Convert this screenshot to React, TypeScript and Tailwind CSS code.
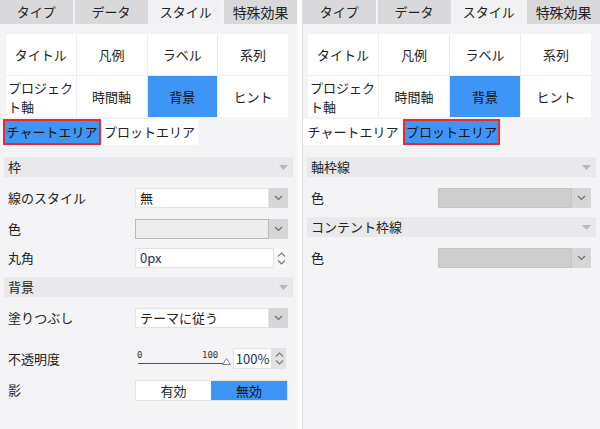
import React from 'react'

const FONT = "font-['Noto_Sans_CJK_JP','Noto_Sans',sans-serif]"

const TABS = ['タイプ', 'データ', 'スタイル', '特殊効果']
const GRID = [
  ['タイトル', '凡例', 'ラベル', '系列'],
  ['プロジェクト軸', '時間軸', '背景', 'ヒント'],
]

function Chevron() {
  return (
    <svg width="9" height="6" viewBox="0 0 9 6" fill="none">
      <path d="M1 1l3.5 3.5L8 1" stroke="#6b6b6b" strokeWidth="1.2" />
    </svg>
  )
}

function Spinner({ gray }: { gray?: boolean }) {
  return (
    <div className={`flex w-[14px] flex-col items-center justify-center gap-[3px] ${gray ? 'bg-[#e2e2e4]' : 'bg-[#f7f7f7]'}`}>
      <svg width="9" height="5" viewBox="0 0 9 5" fill="none">
        <path d="M1 4.5L4.5 1 8 4.5" stroke="#777" strokeWidth="1.1" />
      </svg>
      <svg width="9" height="5" viewBox="0 0 9 5" fill="none">
        <path d="M1 0.5L4.5 4 8 0.5" stroke="#777" strokeWidth="1.1" />
      </svg>
    </div>
  )
}

function Header({ label, top }: { label: string; top: string }) {
  return (
    <div className={`${top} mx-[4px] flex h-[20px] items-center justify-between bg-[#e9e9eb] pl-[4px] pr-[5px] text-[13px] text-[#222]`}>
      <span>{label}</span>
      <svg width="9" height="5" viewBox="0 0 9 5">
        <path d="M0 0h9L4.5 5z" fill="#b8b8bc" />
      </svg>
    </div>
  )
}

function Row({ label, top, children }: { label: string; top: string; children: React.ReactNode }) {
  return (
    <div className={`${top} flex h-[20px] items-center`}>
      <span className="w-[135px] pl-[8px] text-[13px] text-[#222]">{label}</span>
      <div className="flex h-full w-[153px]">{children}</div>
    </div>
  )
}

function Select({ value, variant }: { value?: string; variant: 'white' | 'disabled' | 'gray' }) {
  const box =
    variant === 'white'
      ? 'bg-white border border-[#e3e3e3]'
      : variant === 'disabled'
        ? 'bg-[#ececec] border border-[#b9b9b9]'
        : 'bg-[#cecece] border border-[#c4c4c4]'
  return (
    <div className="flex h-full w-full">
      <div className={`flex flex-1 items-center px-[4px] text-[13px] text-[#222] ${box}`}>{value}</div>
      <div className="flex w-[19px] items-center justify-center bg-[#d6d6d8]">
        <Chevron />
      </div>
    </div>
  )
}

function Panel({ side }: { side: 'left' | 'right' }) {
  const left = side === 'left'
  return (
    <div className={`flex h-full flex-col bg-[#f4f4f6] ${left ? 'w-[297px]' : 'w-[298px] border-l border-[#dedee0]'}`}>
      <div className="flex h-[24px] gap-[2px]">
        {TABS.map((t, i) => (
          <div
            key={t}
            className={`flex flex-1 items-center justify-center text-[13px] text-[#222] ${i === 2 ? 'bg-[#f2f2f4]' : 'bg-[#d9d9dc]'} ${i === 3 ? 'text-[14px]' : ''}`}
          >
            {t}
          </div>
        ))}
      </div>

      <div className={`mt-[10px] grid w-[282px] grid-cols-4 gap-[1px] bg-[#ededef] ${left ? 'ml-[6px]' : 'ml-[5px] w-[283px]'}`}>
        {GRID.flat().map((g) => (
          <div
            key={g}
            className={`flex h-[41px] items-center justify-center text-[13px] leading-[19px] ${g === '背景' ? 'bg-[#3d95f5] text-[#111]' : 'bg-white text-[#222]'} ${g === 'プロジェクト軸' ? 'justify-start px-[2px]' : ''}`}
          >
            {g === 'プロジェクト軸' ? (
              <span>
                プロジェク
                <br />
                ト軸
              </span>
            ) : (
              g
            )}
          </div>
        ))}
      </div>

      <div className={`mt-[2px] flex h-[26px] items-center text-[13px] ${left ? 'pl-[3px]' : 'pl-0'}`}>
        <div
          className={`flex h-full items-center justify-center ${left ? 'w-[98px] border-2 border-[#e82a2f] bg-[#3d95f5] text-[#111]' : 'w-[100px] bg-white text-[#222]'}`}
        >
          チャートエリア
        </div>
        <div
          className={`flex h-full w-[97px] items-center justify-center ${left ? 'h-[24px] bg-white text-[#222]' : 'border-2 border-[#e82a2f] bg-[#3d95f5] text-[#111]'}`}
        >
          プロットエリア
        </div>
      </div>

      {left ? (
        <>
          <Header label="枠" top="mt-[12px]" />
          <Row label="線のスタイル" top="mt-[11px]">
            <Select value="無" variant="white" />
          </Row>
          <Row label="色" top="mt-[11px]">
            <Select variant="disabled" />
          </Row>
          <Row label="丸角" top="mt-[9px]">
            <div className="flex h-full w-full">
              <div className="flex flex-1 items-center border border-[#e3e3e3] bg-white px-[4px] text-[13px] text-[#1f2d5c]">0px</div>
              <Spinner />
            </div>
          </Row>
          <Header label="背景" top="mt-[9px]" />
          <Row label="塗りつぶし" top="mt-[11px]">
            <Select value="テーマに従う" variant="white" />
          </Row>
          <div className="mt-[20px] flex h-[21px] items-center">
            <span className="w-[135px] pl-[8px] text-[13px] text-[#222]">不透明度</span>
            <div className="relative h-full w-[98px]">
              <span className="absolute left-[2px] top-[1px] font-['DejaVu_Sans_Mono',monospace] text-[9px] text-[#333]">0</span>
              <span className="absolute left-[67px] top-[1px] font-['DejaVu_Sans_Mono',monospace] text-[9px] text-[#333]">100</span>
              <div className="absolute left-[3px] top-[15px] h-[1px] w-[88px] bg-[#555]" />
              <svg className="absolute left-[87px] top-[10px]" width="9" height="7" viewBox="0 0 9 7">
                <path d="M4.5 0.5L8.5 6.5H0.5z" fill="white" stroke="#888" />
              </svg>
            </div>
            <div className="flex h-full w-[53px]">
              <div className="flex w-[40px] items-center justify-center border border-[#e3e3e3] bg-white text-[13px] text-[#1f2d5c]">100%</div>
              <Spinner gray />
            </div>
          </div>
          <Row label="影" top="mt-[11px]">
            <div className="flex h-[21px] w-full border border-[#e3e3e3] text-[13px]">
              <div className="flex flex-1 items-center justify-center bg-white text-[#222]">有効</div>
              <div className="flex w-[76px] items-center justify-center bg-[#3d95f5] text-[#111]">無効</div>
            </div>
          </Row>
        </>
      ) : (
        <>
          <Header label="軸枠線" top="mt-[12px]" />
          <Row label="色" top="mt-[11px]">
            <Select variant="gray" />
          </Row>
          <Header label="コンテント枠線" top="mt-[9px]" />
          <Row label="色" top="mt-[11px]">
            <Select variant="gray" />
          </Row>
        </>
      )}
    </div>
  )
}

export default function App() {
  return (
    <div className={`flex h-[429px] w-[600px] bg-white ${FONT}`}>
      <Panel side="left" />
      <div className="w-[5px]" />
      <Panel side="right" />
    </div>
  )
}
